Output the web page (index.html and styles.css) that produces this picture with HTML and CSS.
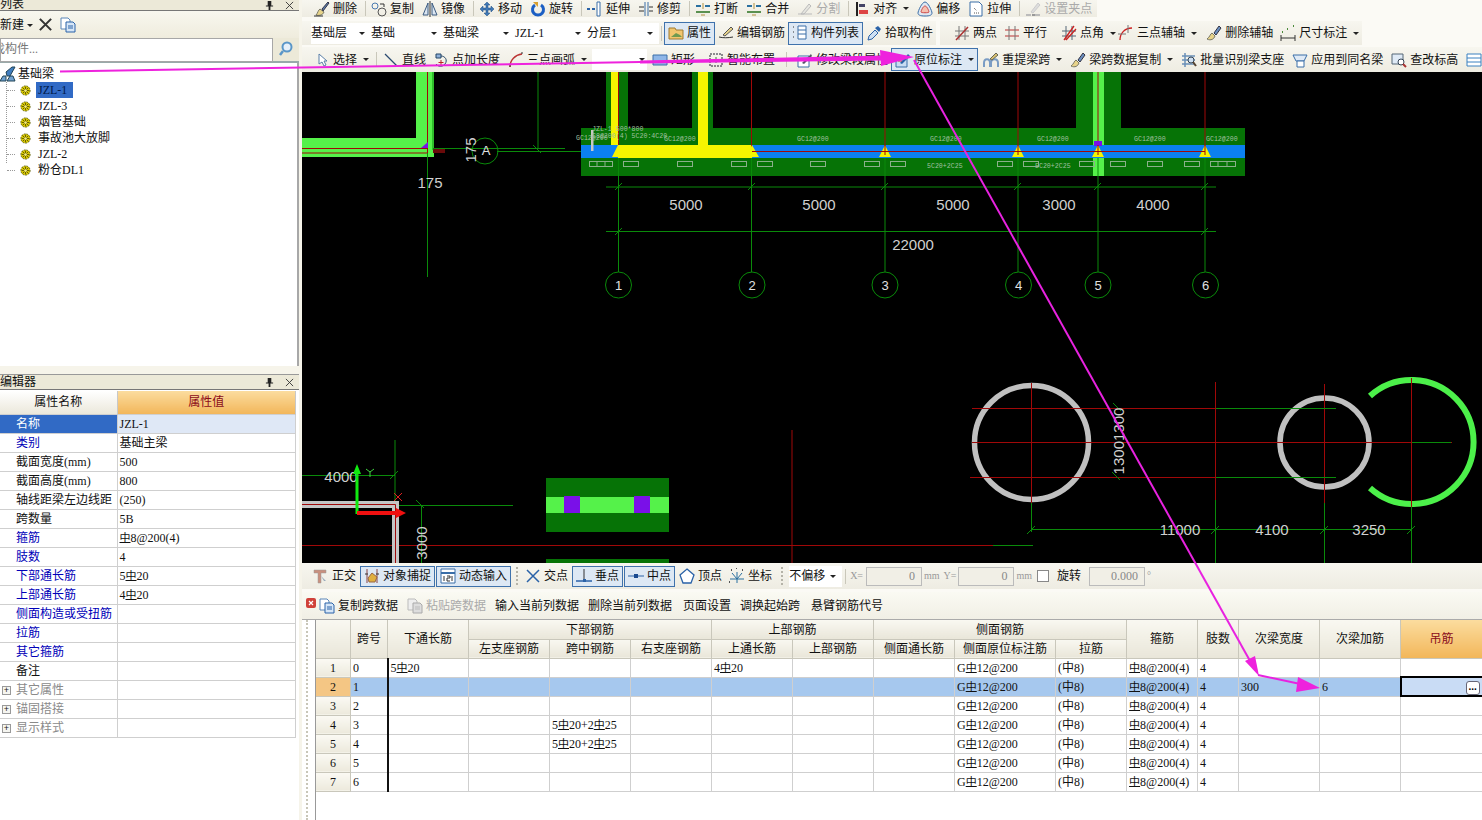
FILE: index.html
```html
<!DOCTYPE html>
<html lang="zh">
<head>
<meta charset="utf-8">
<title>基础梁</title>
<link rel="stylesheet" href="styles.css">
</head>
<body>
<svg class="defs" xmlns="http://www.w3.org/2000/svg">
<symbol id="i-del" viewBox="0 0 16 16"><path d="M2 14c3 1 7 0 8-3L6 8c-2 1-2 4-4 6z" fill="#e8d48a" stroke="#776"/><path d="M8 8l6-7 1 1-6 8z" fill="#5a7fb0" stroke="#334"/><path d="M0 15h9" stroke="#333"/></symbol>
<symbol id="i-copy" viewBox="0 0 16 16"><circle cx="4" cy="5" r="3" fill="none" stroke="#4a7ab0"/><circle cx="11" cy="11" r="4" fill="none" stroke="#555"/><path d="M9 3h4M13 3v3" stroke="#333"/></symbol>
<symbol id="i-mirror" viewBox="0 0 16 16"><path d="M6 2L1 14h5zM10 2l5 12h-5z" fill="#dbe6f2" stroke="#3a5a80"/><path d="M8 0v16" stroke="#333"/></symbol>
<symbol id="i-move" viewBox="0 0 16 16"><path d="M8 1l3 3H9v3h3V5l3 3-3 3V9H9v3h2l-3 3-3-3h2V9H4v2L1 8l3-3v2h3V4H5z" fill="#3f78b5" stroke="#214f80" stroke-width=".5"/></symbol>
<symbol id="i-rot" viewBox="0 0 16 16"><path d="M5 4a5.5 5.5 0 1 0 6 0" fill="none" stroke="#1c5fc4" stroke-width="3"/><path d="M3 1h5v5z" fill="#d8a030"/></symbol>
<symbol id="i-ext" viewBox="0 0 16 16"><path d="M0 8h3M5 8h3" stroke="#2a62a8" stroke-width="2"/><path d="M10 1h3v14h-3z" fill="#fff" stroke="#3a6ea8"/></symbol>
<symbol id="i-trim" viewBox="0 0 16 16"><path d="M7 1v14M10 1v14" stroke="#3a6ea8"/><path d="M1 6h5M1 10h5M11 6h4M11 10h4" stroke="#333"/></symbol>
<symbol id="i-break" viewBox="0 0 16 16"><path d="M1 5h5M10 5h5" stroke="#2a70a0" stroke-width="2"/><path d="M1 11h14" stroke="#5a9050" stroke-width="2"/><path d="M8 2v6M6 14h4" stroke="#b09040"/></symbol>
<symbol id="i-split" viewBox="0 0 16 16"><path d="M1 13h14M4 13l8-10 2 2-7 8z" fill="#e6e6e0" stroke="#bbb"/></symbol>
<symbol id="i-align" viewBox="0 0 16 16"><path d="M3 1v14" stroke="#222" stroke-width="2"/><path d="M5 3h6v3H5z" fill="#446"/><path d="M5 9h9v4H5z" fill="#d44"/></symbol>
<symbol id="i-offset" viewBox="0 0 16 16"><path d="M8 1c3 0 7 9 7 11s-2 3-7 3-7-1-7-3S5 1 8 1z" fill="#dfe8f2" stroke="#3a6ea8"/><path d="M8 5c2 0 4 5 4 6s-8 1-8 0 2-6 4-6z" fill="#f5c0b0" stroke="#c44"/></symbol>
<symbol id="i-stretch" viewBox="0 0 16 16"><path d="M2 1h9l3 3v11H2z" fill="#fff" stroke="#3a6ea8"/><path d="M6 7l3 3M6 12h5" stroke="#555" stroke-dasharray="1 1"/></symbol>
<symbol id="i-grip" viewBox="0 0 16 16"><path d="M1 14h5M10 14h5" stroke="#bbb" stroke-width="2"/><path d="M7 13h3v2H7z" fill="#999"/><path d="M6 11l7-9 2 2-7 8z" fill="#ddd" stroke="#ccc"/></symbol>
<symbol id="i-folder" viewBox="0 0 16 16"><path d="M1 3h6l1 2h7v9H1z" fill="#f2c66e" stroke="#a07a30"/><path d="M3 12l5-4 4 2 2 2z" fill="#6f9a50"/></symbol>
<symbol id="i-pen" viewBox="0 0 16 16"><path d="M1 12c4 1 9 1 14 0" stroke="#333" fill="none"/><path d="M5 10l8-8 2 2-8 7z" fill="#e8d48a" stroke="#555"/></symbol>
<symbol id="i-list" viewBox="0 0 16 16"><path d="M1 2h2M1 7h2M1 12h2" stroke="#333" stroke-dasharray="1 1"/><path d="M6 1h8v13H6zM6 5h8M6 9h8" fill="#fff" stroke="#3a6ea8"/></symbol>
<symbol id="i-drop" viewBox="0 0 16 16"><path d="M2 15l1-4 6-6 3 3-6 6z" fill="#cfe0f2" stroke="#2a62a8"/><path d="M9 3l3-2 3 3-2 3z" fill="#2a62a8"/></symbol>
<symbol id="i-two" viewBox="0 0 16 16"><path d="M1 6h14M1 11h14M5 1v14M11 1v14" stroke="#777"/><path d="M2 15L14 2" stroke="#a33" stroke-width="1.5"/></symbol>
<symbol id="i-par" viewBox="0 0 16 16"><path d="M1 5h14M1 11h14" stroke="#b33"/><path d="M5 1v14M11 1v14" stroke="#777"/></symbol>
<symbol id="i-ang" viewBox="0 0 16 16"><path d="M1 6h14M1 11h14M5 1v14M11 1v14" stroke="#567"/><path d="M3 15L13 1M5 15L15 4" stroke="#c22" stroke-width="1.3"/></symbol>
<symbol id="i-arcaxis" viewBox="0 0 16 16"><path d="M2 15C2 8 7 3 14 3" fill="none" stroke="#c22" stroke-width="1.4"/><path d="M0 9h8M10 0v8" stroke="#777"/></symbol>
<symbol id="i-brush" viewBox="0 0 16 16"><path d="M1 14c4 2 7 0 8-3L6 8c-2 1-2 4-5 6z" fill="#e8d48a" stroke="#776"/><path d="M8 8l5-7 2 2-5 7z" fill="#6a8fc0" stroke="#334"/></symbol>
<symbol id="i-dim" viewBox="0 0 16 16"><path d="M1 13h14M1 10v6M15 10v6" stroke="#333"/><path d="M2 7h1M7 4h1M13 1h1" stroke="#4a8a3a" stroke-width="2"/></symbol>
<symbol id="i-cursor" viewBox="0 0 16 16"><path d="M5 2v10l3-2 2 4 2-1-2-4h3z" fill="#fff" stroke="#5a7fa8"/></symbol>
<symbol id="i-line" viewBox="0 0 16 16"><path d="M2 2l12 12" stroke="#2a4a70" stroke-width="1.2"/></symbol>
<symbol id="i-ptlen" viewBox="0 0 16 16"><path d="M3 2h5v4H3z" fill="#8fb0d8" stroke="#246"/><path d="M8 4c4 0 7 4 4 8-2 3-7 3-9 0" fill="none" stroke="#246"/><path d="M8 8v5M5.5 10.500h5" stroke="#b22"/></symbol>
<symbol id="i-arc" viewBox="0 0 16 16"><path d="M2 15C2 8 7 3 14 2" fill="none" stroke="#b33" stroke-width="1.4"/><path d="M1 14h2M13 1h2" stroke="#333"/></symbol>
<symbol id="i-rect" viewBox="0 0 16 16"><path d="M1 3h14v10H1z" fill="#8fb6e8" stroke="#3a6ea8"/></symbol>
<symbol id="i-smart" viewBox="0 0 16 16"><path d="M2 2h12v12H2z" fill="none" stroke="#223" stroke-dasharray="2 1"/><path d="M8 5v6M5 8h6" stroke="#3a7a3a"/></symbol>
<symbol id="i-edit" viewBox="0 0 16 16"><path d="M1 4h11v11H1z" fill="#fff" stroke="#3a6ea8"/><path d="M5 11l9-9 1 2-8 8z" fill="#556" /></symbol>
<symbol id="i-mark" viewBox="0 0 16 16"><path d="M1 5h11v10H1z" fill="#c8dcf2" stroke="#3a6ea8"/><path d="M5 11l8-9 2 2-8 8z" fill="#2a62a8"/><path d="M3 9h4" stroke="#c33"/></symbol>
<symbol id="i-span" viewBox="0 0 16 16"><path d="M1 15v-4c0-5 6-5 6 0v4M8 15v-4c0-5 7-5 7 0v4" fill="none" stroke="#7a9cc4" stroke-width="2"/><path d="M7 7l6-6 2 2-6 5z" fill="#d8c070" stroke="#665"/></symbol>
<symbol id="i-batch" viewBox="0 0 16 16"><path d="M1 4h13M1 8h13M1 12h13M4 1v14" stroke="#6a90b8" stroke-width="1.500"/><circle cx="10" cy="8" r="3" fill="#cfe0f2" stroke="#345"/><path d="M12 10l3 4" stroke="#543" stroke-width="2"/></symbol>
<symbol id="i-apply" viewBox="0 0 16 16"><path d="M1 3h14l-3 6H4z" fill="#dfeaf6" stroke="#3a6ea8"/><path d="M5 9h7v6H5z" fill="#fff" stroke="#3a6ea8"/></symbol>
<symbol id="i-level" viewBox="0 0 16 16"><path d="M1 2h11v10H1z" fill="#dfeaf6" stroke="#567"/><circle cx="10" cy="10" r="3" fill="#fff" stroke="#345"/><path d="M12 12l3 3" stroke="#a33" stroke-width="2"/></symbol>
<symbol id="i-tbl" viewBox="0 0 16 16"><path d="M1 2h14v12H1zM1 6h14M1 10h14" fill="#fff" stroke="#3a80c0"/></symbol>
<symbol id="i-ortho" viewBox="0 0 16 16"><path d="M1 2h12v3H8v10H5V5H1z" fill="#c9907e" stroke="#999" stroke-width=".5"/><path d="M8 8l5 5-2 0z" fill="#9ab"/></symbol>
<symbol id="i-snap" viewBox="0 0 16 16"><path d="M3 1v14M13 1v14" stroke="#844"/><path d="M1 6h3M12 6h3" stroke="#333"/><path d="M4 10l4-5 5 4-2 5H5z" fill="#e0b040" stroke="#964"/></symbol>
<symbol id="i-dyn" viewBox="0 0 16 16"><path d="M1 1h14v14H1z" fill="#fff" stroke="#3a6ea8"/><path d="M1 5h14" stroke="#3a6ea8" stroke-width="2"/><path d="M4 8v5M7 8h3v2H7v3h3M12 8v5" stroke="#333" fill="none"/></symbol>
<symbol id="i-x" viewBox="0 0 16 16"><path d="M2 2l12 12M14 2L2 14" stroke="#2a62a8" stroke-width="1.500"/></symbol>
<symbol id="i-perp" viewBox="0 0 16 16"><path d="M0 13h16" stroke="#2a62a8" stroke-width="1.500"/><path d="M8 1v11" stroke="#333"/><path d="M7 11h3v3H7z" fill="#2a62a8"/></symbol>
<symbol id="i-mid" viewBox="0 0 16 16"><path d="M0 8h16" stroke="#2a62a8"/><path d="M6 6h4v4H6z" fill="#1a4a90"/></symbol>
<symbol id="i-vert" viewBox="0 0 16 16"><path d="M8 1l7 6-3 8H4L1 7z" fill="#fff" stroke="#2a62a8" stroke-width="1.300"/></symbol>
<symbol id="i-coord" viewBox="0 0 16 16"><path d="M8 4v11M1 11h14M3 5l5 6 5-6" fill="none" stroke="#2a70a0"/><path d="M2 2h1M7 0h2M13 2h1M0 14h2" stroke="#555" stroke-width="2" stroke-dasharray="1 1"/></symbol>
<symbol id="i-doc" viewBox="0 0 16 16"><path d="M1 1h7l2 2v9H1z" fill="#fff" stroke="#5a86b8"/><path d="M6 5h7l2 2v8H6z" fill="#d6e6f7" stroke="#2a62a8"/><path d="M8 9h5M8 11h5" stroke="#2a62a8"/></symbol>
<symbol id="i-doc-g" viewBox="0 0 16 16"><path d="M1 1h7l2 2v9H1z" fill="#eee" stroke="#bbb"/><path d="M6 5h7l2 2v8H6z" fill="#ddd" stroke="#aaa"/><path d="M8 9h5M8 11h5" stroke="#bbb"/></symbol>
<symbol id="i-pin" viewBox="0 0 10 10"><path d="M3 0h4v5h2v1H6v4H4V6H1V5h2z" fill="#222"/></symbol>
<symbol id="i-close" viewBox="0 0 10 10"><path d="M1 1l8 8M9 1L1 9" stroke="#333" stroke-width="1"/></symbol>
<symbol id="i-gear" viewBox="0 0 12 12"><circle cx="6" cy="6" r="5" fill="#d8c800" stroke="#5a5a00" stroke-dasharray="2 1"/><path d="M2 6h8M6 2v8M3 3l6 6M9 3l-6 6" stroke="#605a00"/><circle cx="6" cy="6" r="1.500" fill="#f5ee80"/></symbol>
<symbol id="i-tree" viewBox="0 0 16 16"><path d="M0 15l3-5h3v5zM7 15l3-5h3l2 5z" fill="#6fa0d0" stroke="#245"/><path d="M6 6l6-5h3l-5 9H7z" fill="#3f7cbf" stroke="#245"/></symbol>
</svg>

<div class="app">
  <aside class="left">
    <section class="pane-top">
      <header class="title title-clip"><span>列表</span><span class="win-btns"><svg><use href="#i-pin"/></svg><svg><use href="#i-close"/></svg></span></header>
      <div class="left-tools">
        <span class="dd">新建</span>
        <svg class="big-x" viewBox="0 0 16 16"><path d="M2 2l12 12M14 2L2 14" stroke="#333" stroke-width="2.200"/></svg>
        <svg class="ic"><use href="#i-doc"/></svg>
      </div>
      <div class="search">
        <div class="search-input"><span>找构件...</span></div>
        <div class="search-btn"><svg viewBox="0 0 16 16"><circle cx="9" cy="6" r="4.500" fill="#e6f0fa" stroke="#5a96c8" stroke-width="2"/><path d="M5 10l-3 4" stroke="#5a96c8" stroke-width="2.500"/></svg></div>
      </div>
      <div class="tree">
        <div class="root"><svg class="ic"><use href="#i-tree"/></svg><span>基础梁</span></div>
        <ul class="children">
          <li class="cur"><svg><use href="#i-gear"/></svg><span>JZL-1</span></li>
          <li><svg><use href="#i-gear"/></svg><span>JZL-3</span></li>
          <li><svg><use href="#i-gear"/></svg><span>烟管基础</span></li>
          <li><svg><use href="#i-gear"/></svg><span>事故池大放脚</span></li>
          <li><svg><use href="#i-gear"/></svg><span>JZL-2</span></li>
          <li><svg><use href="#i-gear"/></svg><span>粉仓DL1</span></li>
        </ul>
      </div>
    </section>
    <section class="pane-bottom">
      <header class="title"><span>编辑器</span><span class="win-btns"><svg><use href="#i-pin"/></svg><svg><use href="#i-close"/></svg></span></header>
      <table class="props">
        <thead><tr><th>属性名称</th><th class="orange">属性值</th></tr></thead>
        <tbody>
          <tr class="sel"><td class="nm">名称</td><td>JZL-1</td></tr>
          <tr><td class="nm link">类别</td><td>基础主梁</td></tr>
          <tr><td class="nm">截面宽度(mm)</td><td>500</td></tr>
          <tr><td class="nm">截面高度(mm)</td><td>800</td></tr>
          <tr><td class="nm">轴线距梁左边线距</td><td>(250)</td></tr>
          <tr><td class="nm">跨数量</td><td>5B</td></tr>
          <tr><td class="nm link">箍筋</td><td><u>中</u>8@200(4)</td></tr>
          <tr><td class="nm link">肢数</td><td>4</td></tr>
          <tr><td class="nm link">下部通长筋</td><td>5<u>中</u>20</td></tr>
          <tr><td class="nm link">上部通长筋</td><td>4<u>中</u>20</td></tr>
          <tr><td class="nm link">侧面构造或受扭筋</td><td></td></tr>
          <tr><td class="nm link">拉筋</td><td></td></tr>
          <tr><td class="nm link">其它箍筋</td><td></td></tr>
          <tr><td class="nm">备注</td><td></td></tr>
          <tr class="group"><td class="nm"><i class="plus">+</i>其它属性</td><td></td></tr>
          <tr class="group"><td class="nm"><i class="plus">+</i>锚固搭接</td><td></td></tr>
          <tr class="group"><td class="nm"><i class="plus">+</i>显示样式</td><td></td></tr>
        </tbody>
      </table>
    </section>
  </aside>

  <main class="right">
    <div class="bar r1">
      <div class="strip s1">
        <span class="it"><svg><use href="#i-del"/></svg>删除</span><i class="sep"></i>
        <span class="it"><svg><use href="#i-copy"/></svg>复制</span>
        <span class="it"><svg><use href="#i-mirror"/></svg>镜像</span><i class="sep"></i>
        <span class="it"><svg><use href="#i-move"/></svg>移动</span>
        <span class="it"><svg><use href="#i-rot"/></svg>旋转</span><i class="sep"></i>
        <span class="it"><svg><use href="#i-ext"/></svg>延伸</span>
        <span class="it"><svg><use href="#i-trim"/></svg>修剪</span><i class="sep"></i>
        <span class="it"><svg><use href="#i-break"/></svg>打断</span>
        <span class="it"><svg><use href="#i-break"/></svg>合并</span>
        <span class="it off"><svg><use href="#i-split"/></svg>分割</span><i class="sep"></i>
        <span class="it dd"><svg><use href="#i-align"/></svg>对齐</span>
        <span class="it"><svg><use href="#i-offset"/></svg>偏移</span>
        <span class="it"><svg><use href="#i-stretch"/></svg>拉伸</span><i class="sep"></i>
        <span class="it off"><svg><use href="#i-grip"/></svg>设置夹点</span>
      </div>
    </div>
    <div class="bar r2">
      <div class="strip s2a">
        <span class="combo first">基础层</span><span class="combo">基础</span><span class="combo">基础梁</span><span class="combo">JZL-1</span><span class="combo">分层1</span><i class="sep"></i>
        <span class="it hi"><svg><use href="#i-folder"/></svg>属性</span>
        <span class="it"><svg><use href="#i-pen"/></svg>编辑钢筋</span>
        <span class="it hi"><svg><use href="#i-list"/></svg>构件列表</span>
        <span class="it"><svg><use href="#i-drop"/></svg>拾取构件</span>
      </div>
      <div class="strip s2b">
        <span class="it"><svg><use href="#i-two"/></svg>两点</span>
        <span class="it"><svg><use href="#i-par"/></svg>平行</span>
        <span class="it dd ml7"><svg><use href="#i-ang"/></svg>点角</span>
        <span class="it dd mln5"><svg><use href="#i-arcaxis"/></svg>三点辅轴</span>
        <span class="it ml2"><svg><use href="#i-brush"/></svg>删除辅轴</span>
        <span class="it dd"><svg><use href="#i-dim"/></svg>尺寸标注</span>
      </div>
    </div>
    <div class="bar r3">
      <div class="strip s3">
        <span class="it dd"><svg><use href="#i-cursor"/></svg>选择</span><i class="sep"></i>
        <span class="it"><svg><use href="#i-line"/></svg>直线</span>
        <span class="it mln1"><svg><use href="#i-ptlen"/></svg>点加长度</span>
        <span class="it dd"><svg><use href="#i-arc"/></svg>三点画弧</span>
        <span class="blank dd"></span>
        <span class="it"><svg><use href="#i-rect"/></svg>矩形</span>
        <span class="it ml5"><svg><use href="#i-smart"/></svg>智能布置</span><i class="sep wide"></i>
        <span class="it"><svg><use href="#i-edit"/></svg>修改梁段属性</span>
        <span class="it hi dd mln2"><svg><use href="#i-mark"/></svg>原位标注</span>
        <span class="it dd"><svg><use href="#i-span"/></svg>重提梁跨</span>
        <span class="it dd"><svg><use href="#i-brush"/></svg>梁跨数据复制</span>
        <span class="it"><svg><use href="#i-batch"/></svg>批量识别梁支座</span>
        <span class="it"><svg><use href="#i-apply"/></svg>应用到同名梁</span>
        <span class="it"><svg><use href="#i-level"/></svg>查改标高</span>
        <span class="it"><svg><use href="#i-tbl"/></svg></span>
      </div>
    </div>

    <svg class="cad" viewBox="302 72 1180 491" xmlns="http://www.w3.org/2000/svg">
      <g class="g-bright">
        <rect x="302" y="138" width="132" height="19"/><rect x="416" y="72" width="18" height="85"/>
      </g>
      <rect class="dred" x="433" y="148" width="12" height="5"/>
      <g class="ln-red">
        <path d="M302 148.500H427M302 153H427M427.500 72V153"/>
      </g>
      <path class="purple" d="M428 142v6h-7z"/>
      <g class="ln-green">
        <path d="M427.500 153V277M433 72V150M433 148.500H565M497 151.500H581M538 72V149M533 145l8 8"/>
        <circle cx="485" cy="151" r="13"/>
      </g>
      <text class="d15" transform="translate(476 150) rotate(-90)" text-anchor="middle">175</text>
      <text class="d15" x="430" y="188" text-anchor="middle">175</text>
      <text class="d12" x="486" y="155" text-anchor="middle">A</text>

      <!-- beam -->
      <g class="g-dark">
        <rect x="581" y="128" width="664" height="48"/>
        <rect x="606" y="72" width="22" height="56"/><rect x="692" y="72" width="21" height="56"/><rect x="1076" y="72" width="45" height="56"/>
      </g>
      <rect class="g-bright" x="1093" y="72" width="11" height="104"/>
      <rect class="yel" x="611" y="72" width="7" height="73"/><rect class="yel" x="698" y="72" width="10" height="73"/>
      <rect class="blue" x="581" y="145" width="664" height="13"/>
      <rect class="yel" x="618" y="145" width="134" height="13"/>
      <path class="ln-red" d="M752 151.500H1205M618.500 72V145M751.500 72V155M885 72V155M1018 72V155M1098 72V155M1205 72V155"/>
      <g class="yel">
        <path d="M612 157l6-12 6 12zM746 157l6-12 7 12zM879 157l6-12 6 12zM1012 157l6-12 6 12zM1092 157l6-12 6 12zM1199 157l6-12 6 12z"/>
      </g>
      <rect class="purple" x="1094" y="141" width="8" height="5"/>
      <path class="ln-red" d="M885 145V155M1018 145V155M1098 145V155M1205 145V155M752 151.500H1205"/>
      <rect class="lite" x="591" y="130" width="2.500" height="21"/>
      <g class="boxes">
        <rect x="589.500" y="161.500" width="23" height="5"/><path d="M597 161.500v5M605 161.500v5"/>
        <rect x="623.500" y="161.500" width="15" height="5"/><rect x="677.500" y="161.500" width="15" height="5"/><rect x="731.500" y="161.500" width="15" height="5"/><rect x="757.500" y="161.500" width="15" height="5"/><rect x="810.500" y="161.500" width="15" height="5"/><rect x="864.500" y="161.500" width="15" height="5"/><rect x="890.500" y="161.500" width="15" height="5"/><rect x="997.500" y="161.500" width="15" height="5"/><rect x="1023.500" y="161.500" width="15" height="5"/><rect x="1079.500" y="161.500" width="15" height="5"/><rect x="1110.500" y="161.500" width="15" height="5"/><rect x="1147.500" y="161.500" width="15" height="5"/><rect x="1184.500" y="161.500" width="15" height="5"/><rect x="1210.500" y="161.500" width="25" height="5"/><path d="M1218 161.500v5M1227 161.500v5"/>
      </g>
      <g class="t6">
        <text x="592" y="131">JZL-1 500*800</text>
        <text x="576" y="140">GC12@200</text>
        <text x="592" y="138">C8@200(4) 5C20:4C20</text>
        <text x="664" y="141">GC12@200</text><text x="797" y="141">GC12@200</text><text x="930" y="141">GC12@200</text><text x="1037" y="141">GC12@200</text><text x="1134" y="141">GC12@200</text><text x="1206" y="141">GC12@200</text>
        <text x="927" y="168">5C20+2C25</text><text x="1035" y="168">5C20+2C25</text>
      </g>
      <g class="ln-green">
        <path d="M618.500 158V272M751.500 158V272M885 158V272M1018 158V272M1098 158V272M1205 158V272"/>
        <path d="M606 187H1216M606 231.500H1216"/>
        <path d="M615 190l7-7M748 190l7-7M881 190l7-7M1014 190l7-7M1094 190l7-7M1201 190l7-7M615 235l7-7M1201 235l7-7"/>
        <circle cx="618.500" cy="285" r="13"/><circle cx="752" cy="285" r="13"/><circle cx="885" cy="285" r="13"/><circle cx="1018.500" cy="285" r="13"/><circle cx="1098" cy="285" r="13"/><circle cx="1205.500" cy="285" r="13"/>
      </g>
      <g class="d15" text-anchor="middle">
        <text x="686" y="210">5000</text><text x="819" y="210">5000</text><text x="953" y="210">5000</text><text x="1059" y="210">3000</text><text x="1153" y="210">4000</text><text x="913" y="250">22000</text>
      </g>
      <g class="d12" text-anchor="middle">
        <text x="618.500" y="290">1</text><text x="752" y="290">2</text><text x="885" y="290">3</text><text x="1018.500" y="290">4</text><text x="1098" y="290">5</text><text x="1205.500" y="290">6</text>
      </g>

      <!-- circles -->
      <circle class="ring" cx="1031.500" cy="442.500" r="57"/>
      <circle class="ring" cx="1324.500" cy="442.500" r="44.500"/>
      <path class="arc" d="M1370 396A62 62 0 1 1 1370 488"/>
      <path class="ln-red" d="M972 408.500H1216M972 442.500H1452M970 477.500H1216M1031.500 383V503M1215.500 382V500M1324.500 384V503M1411.500 378V507M302 545.500H993M792 430V563"/>
      <g class="ln-green">
        <path d="M1216 408.500H1336M1412 442.500H1451M1216 477.500H1336M993 545.500H1033M1031.500 503V532M1215.500 500V563M1324.500 503V563M1411.500 507V563M1031 529.500H1412"/>
        <path d="M1027 534l8-8M1211 534l8-8M1320 534l8-8M1407 534l8-8M1113 403l8 8M1112 472l8 8"/>
      </g>
      <g class="d15" text-anchor="middle">
        <text x="1180" y="535">11000</text><text x="1272" y="535">4100</text><text x="1369" y="535">3250</text>
        <text transform="translate(1124 441) rotate(-90)">13001300</text>
      </g>

      <!-- lower-left -->
      <g class="ln-green"><path d="M302 475.500H395M395 440V503M399 505.500H513M421.500 505.500V563M390 479l8-8M416 500l8 8"/></g>
      <path class="ring-l" d="M302 504.500H395.500V563"/>
      <path class="ln-red" d="M302 504.500H395.500V563"/>
      <text class="d15" x="341" y="482" text-anchor="middle">4000</text>
      <text class="d15" transform="translate(427 543) rotate(-90)" text-anchor="middle">3000</text>
      <path class="axis-g" d="M355.500 514V474H353l4-10 4 10h-2.500V514z"/>
      <path class="axis-r" d="M357 511H396V508l10 5-10 5V515H357z"/>
      <path class="ln-bg" d="M366 469l4 3 4-3M370 472v5"/>
      <path class="ln-x" d="M394 493l8 8M402 493l-8 8"/>
      <g class="g-dark"><rect x="546" y="478" width="123" height="54"/><rect x="546" y="559" width="123" height="4"/></g>
      <rect class="g-bright" x="546" y="497" width="123" height="16"/>
      <rect class="purple" x="564" y="496" width="16" height="17"/><rect class="purple" x="634" y="496" width="16" height="17"/>
    </svg>

    <div class="bar snap">
      <div class="strip s4">
        <span class="it"><svg><use href="#i-ortho"/></svg>正交</span>
        <span class="it hi"><svg><use href="#i-snap"/></svg>对象捕捉</span>
        <span class="it hi"><svg><use href="#i-dyn"/></svg>动态输入</span><i class="sep dotted"></i>
        <span class="it"><svg><use href="#i-x"/></svg>交点</span>
        <span class="it hi"><svg><use href="#i-perp"/></svg>垂点</span>
        <span class="it hi"><svg><use href="#i-mid"/></svg>中点</span>
        <span class="it"><svg><use href="#i-vert"/></svg>顶点</span>
        <span class="it"><svg><use href="#i-coord"/></svg>坐标</span><i class="sep dotted wide"></i>
        <span class="combo small">不偏移</span><i class="sep narrow"></i>
        <span class="lab xl">X=</span><span class="num w56">0</span><span class="lab">mm</span>
        <span class="lab y">Y=</span><span class="num w56">0</span><span class="lab">mm</span>
        <span class="check"></span><span class="rot">旋转</span><span class="num w56">0.000</span><span class="lab">°</span>
      </div>
    </div>

    <div class="lower">
      <div class="lower-head">
        <svg class="close-red" viewBox="0 0 10 10"><rect width="10" height="10" rx="2" fill="#d0413a"/><path d="M3 3l4 4M7 3L3 7" stroke="#fff" stroke-width="1.200"/></svg>
        <span class="it"><svg><use href="#i-doc"/></svg>复制跨数据</span>
        <span class="it off"><svg><use href="#i-doc-g"/></svg>粘贴跨数据</span>
        <span class="it">输入当前列数据</span>
        <span class="it">删除当前列数据</span>
        <span class="it ml2">页面设置</span>
        <span class="it">调换起始跨</span>
        <span class="it ml2">悬臂钢筋代号</span>
      </div>
      <div class="grid-wrap">
        <div class="grid-inner">
        <table class="grid">
          <colgroup><col class="c35"><col class="c37"><col class="c81"><col class="c81"><col class="c81"><col class="c81"><col class="c81"><col class="c81"><col class="c81"><col class="c101"><col class="c71"><col class="c71"><col class="c41"><col class="c81"><col class="c81"><col class="c82"></colgroup>
          <thead>
            <tr><th rowspan="2"></th><th rowspan="2">跨号</th><th rowspan="2">下通长筋</th><th colspan="3">下部钢筋</th><th colspan="2">上部钢筋</th><th colspan="3">侧面钢筋</th><th rowspan="2">箍筋</th><th rowspan="2">肢数</th><th rowspan="2">次梁宽度</th><th rowspan="2">次梁加筋</th><th rowspan="2" class="orange">吊筋</th></tr>
            <tr><th>左支座钢筋</th><th>跨中钢筋</th><th>右支座钢筋</th><th>上通长筋</th><th>上部钢筋</th><th>侧面通长筋</th><th>侧面原位标注筋</th><th>拉筋</th></tr>
          </thead>
          <tbody>
            <tr><th>1</th><td>0</td><td class="fz">5<u>中</u>20</td><td></td><td></td><td></td><td>4<u>中</u>20</td><td></td><td></td><td>G<u>中</u>12@200</td><td>(中8)</td><td><u>中</u>8@200(4)</td><td>4</td><td></td><td></td><td></td></tr>
            <tr class="sel"><th>2</th><td>1</td><td class="fz"></td><td></td><td></td><td></td><td></td><td></td><td></td><td>G<u>中</u>12@200</td><td>(中8)</td><td><u>中</u>8@200(4)</td><td>4</td><td>300</td><td>6</td><td class="active"><span class="more">...</span></td></tr>
            <tr><th>3</th><td>2</td><td class="fz"></td><td></td><td></td><td></td><td></td><td></td><td></td><td>G<u>中</u>12@200</td><td>(中8)</td><td><u>中</u>8@200(4)</td><td>4</td><td></td><td></td><td></td></tr>
            <tr><th>4</th><td>3</td><td class="fz"></td><td></td><td>5<u>中</u>20+2<u>中</u>25</td><td></td><td></td><td></td><td></td><td>G<u>中</u>12@200</td><td>(中8)</td><td><u>中</u>8@200(4)</td><td>4</td><td></td><td></td><td></td></tr>
            <tr><th>5</th><td>4</td><td class="fz"></td><td></td><td>5<u>中</u>20+2<u>中</u>25</td><td></td><td></td><td></td><td></td><td>G<u>中</u>12@200</td><td>(中8)</td><td><u>中</u>8@200(4)</td><td>4</td><td></td><td></td><td></td></tr>
            <tr><th>6</th><td>5</td><td class="fz"></td><td></td><td></td><td></td><td></td><td></td><td></td><td>G<u>中</u>12@200</td><td>(中8)</td><td><u>中</u>8@200(4)</td><td>4</td><td></td><td></td><td></td></tr>
            <tr><th>7</th><td>6</td><td class="fz"></td><td></td><td></td><td></td><td></td><td></td><td></td><td>G<u>中</u>12@200</td><td>(中8)</td><td><u>中</u>8@200(4)</td><td>4</td><td></td><td></td><td></td></tr>
          </tbody>
        </table>
        </div>
      </div>
    </div>
  </main>
</div>

<svg class="annot" viewBox="0 0 1482 820" xmlns="http://www.w3.org/2000/svg">
  <path class="mg" d="M60 71.500L640 62"/>
  <path class="mgf" d="M640 60.500L885 55.500L885 60.500L640 63.500z"/>
  <path class="mgf" d="M880 50L914 57L881 66z"/>
  <path class="mg2" d="M914 60L1254 668"/>
  <path class="mgf" d="M1245 661L1259 676L1255 656z"/>
  <path class="mg2" d="M1258 675L1305 685"/>
  <path class="mgf" d="M1298 677L1320 688L1296 692z"/>
</svg>
</body>
</html>
```

FILE: styles.css
```css
* { box-sizing: border-box; }
html, body { margin: 0; height: 100%; overflow: hidden; }
body {
  font: 12px/16px "Liberation Serif", "Noto Sans CJK SC", serif;
  color: #111;
  background: #fbfaf5;
}
.defs { display: none; }
.app { display: flex; width: 1482px; height: 820px; overflow: hidden; position: relative; }

/* left column */
.left { width: 302px; flex: none; display: flex; flex-direction: column; background: #f6f4ea; }
.pane-top { height: 374px; display: flex; flex-direction: column; }
.pane-bottom { flex: 1; background: #fff; border-right: 3px solid #f6f4ea; }
.title {
  height: 16px; display: flex; justify-content: space-between; align-items: center;
  background: #ece9d8; border-bottom: 1px solid #777; border-top: 1px solid #999;
  font-size: 12px; padding-right: 4px; width: 299px;
}
.title-clip { height: 11px; border-top: 0; align-items: flex-end; overflow: hidden; }
.title-clip > span:first-child { transform: translateY(2px); }
.win-btns { display: flex; gap: 11px; margin-right: 1px; }
.win-btns svg { width: 9px; height: 9px; }
.left-tools {
  height: 27px; width: 299px; display: flex; align-items: center; gap: 5px;
  background: linear-gradient(#f8f7ef, #efecdd);
}
.left-tools .dd::after { margin-left: 3px; }
.big-x { width: 15px; height: 15px; margin-right: 2px; }
.ic { width: 16px; height: 16px; flex: none; }
.search { height: 25px; width: 299px; display: flex; gap: 2px; background: #ece9d8; border-bottom: 2px solid #9aa; }
.search-input {
  width: 273px; height: 24px; background: #fff; border: 1px solid #a7a7a7;
  color: #777; overflow: hidden; line-height: 20px; padding-left: 1px;
}
.search-input span { display: block; margin-left: -9px; }
.search-btn { width: 22px; height: 22px; display: flex; align-items: center; justify-content: center; }
.search-btn svg { width: 16px; height: 16px; }
.tree { flex: none; height: 303px; width: 299px; background: #fff; border-right: 2px solid #a8a8a8; }
.root { display: flex; align-items: center; gap: 2px; height: 19px; padding-top: 2px; }
.children {
  list-style: none; margin: 0 0 0 6px; padding: 0;
  border-left: 1px dotted #999; height: 81px;
}
.children li { display: flex; align-items: center; height: 16px; padding-left: 13px; }
.children li::before { content: ""; width: 8px; border-top: 1px dotted #999; margin-left: -13px; margin-right: 5px; }
.children svg { width: 11px; height: 11px; flex: none; margin-right: 5px; }
.children span { padding: 0 2px; line-height: 16px; }
.children .cur span { background: #316ac5; color: #001a4a; width: 37px; }

/* property table */
.props { border-collapse: collapse; table-layout: fixed; width: 296px; margin-top: 1px; }
.props th:first-child, .props td:first-child { width: 117px; }
.props th {
  height: 23px; font-weight: 400; font-size: 12px;
  background: linear-gradient(#fff, #ebe8db); border-right: 1px solid #c8c8c8;
}
.orange, .props th.orange, .grid th.orange { background: linear-gradient(#fbdc9e, #f2b65a); color: #8a0a1a; }
.props td {
  height: 19px; padding: 1px 0 0 2px; border: 1px solid #cfcfcf; border-left: 0;
  white-space: nowrap; overflow: hidden; line-height: 17px;
}
.props td.nm { padding-left: 16px; }
.props td.link { color: #0000b8; }
.props .sel td { background: #dfe8f6; }
.props .sel td.nm { background: #316ac5; color: #fff; }
.props .group td.nm { color: #8a8a8a; padding-left: 2px; }
.plus {
  display: inline-block; width: 9px; height: 9px; margin-right: 5px; border: 1px solid #999; background: #f5f5f0;
  color: #222; font: 9px/7px "Liberation Sans", sans-serif; text-align: center; vertical-align: 1px;
}
u { font-size: 11px; text-decoration: underline; text-underline-offset: 0; }

/* right column */
.right { flex: 1; min-width: 0; display: flex; flex-direction: column; background: #fbfaf5; }
.bar { display: flex; flex: none; gap: 4px; }
.strip {
  display: flex; align-items: center; gap: 1px; padding-left: 8px;
  background: linear-gradient(#f7f6ef, #eeece2);
  white-space: nowrap;
}
.r1 { height: 17px; margin-bottom: 4px; overflow: hidden; }
.r2 { height: 24px; margin-bottom: 2px; }
.r3 { height: 25px; overflow: hidden; }
.s1 { padding-left: 10px; }
.s1 .it { padding: 0 3px 0 2px; margin-right: 2px; }
.s1 .sep { margin: 0 2px; }
.s1 .dd::after { margin-left: 3px; }
.s2a { padding-left: 9px; gap: 0; }
.s2a .sep { margin: 0 2px; }
.s2b { padding-left: 11px; gap: 1px; }
.s2b .dd::after { margin-left: 3px; }
.s3 { padding-left: 9px; width: 1180px; gap: 2px; }
.s3 .dd::after { margin-left: 3px; }
.s3 .sep { margin: 0 1px 0 2px; }
.s3 .sep.wide { margin: 0 5px 0 6px; }
.ml2 { margin-left: 2px; } .ml5 { margin-left: 5px; } .ml7 { margin-left: 7px; }
.mln1 { margin-left: -1px; } .mln2 { margin-left: -2px; } .mln5 { margin-left: -5px; }
.it { display: flex; align-items: center; gap: 3px; padding: 0 3px; height: 100%; color: #111; }
.it svg { width: 16px; height: 16px; flex: none; }
.it.off { color: #aaa; }
.it.hi { border: 1px solid #3f72ac; background: #dde8f4; height: 23px; padding: 0 3px; }
.dd::after {
  content: ""; display: inline-block; width: 0; height: 0; margin-left: 6px;
  border: 3px solid transparent; border-top-color: #222; border-bottom: 0; vertical-align: middle;
}
.sep { width: 1px; height: 15px; background: #c9c7ba; margin: 0 4px; flex: none; }
.sep.dotted { background: none; border-left: 2px dotted #b5b3a8; width: 2px; height: 18px; margin: 0 3px 0 4px; }
.sep.dotted.wide { margin: 0 5px 0 5px; }
.sep.narrow { margin: 0 2px; }
.combo {
  display: flex; align-items: center; justify-content: space-between;
  width: 72px; height: 21px; padding: 0 6px 0 0; background: #fff; flex: none;
}
.combo.first { width: 60px; }
.combo::after {
  content: ""; width: 0; height: 0; border: 3px solid transparent; border-top-color: #222; border-bottom: 0;
}
.combo.small { width: 53px; }
.blank { width: 55px; height: 21px; background: #fff; display: flex; align-items: center; justify-content: flex-end; padding-right: 2px; flex: none; }

/* drawing canvas */
.cad { width: 1180px; height: 491px; display: block; flex: none; background: #000; }
.g-bright { fill: #55f24a; }
.g-dark { fill: #067306; }
.yel { fill: #f5f500; }
.blue { fill: #0b80f0; }
.purple { fill: #7a10e8; }
.lite { fill: #c8c8c8; }
.dred { fill: #6a0a0a; }
.ln-red, .ln-red path { fill: none; stroke: #a00808; stroke-width: 1; }
.ln-green path, .ln-green circle { fill: none; stroke: #0a8a0a; stroke-width: 1; }
.boxes rect, .boxes path { fill: none; stroke: #8ab08a; stroke-width: 1; }
.t6 text { font: 6.600px "Liberation Mono", monospace; fill: #a0c0a0; }
.d15, .d15 text { font: 15px "Liberation Sans", sans-serif; fill: #d0d0d0; }
.d12, .d12 text { font: 13px "Liberation Sans", sans-serif; fill: #e0e0e0; }
.ring { fill: none; stroke: #c0c0c0; stroke-width: 5.5; }
.ring-l { fill: none; stroke: #c4c4c4; stroke-width: 7; }
.arc { fill: none; stroke: #4cf04a; stroke-width: 6; }
.axis-g { fill: #10ea10; }
.axis-r { fill: #f01010; }
.ln-bg { fill: none; stroke: #40d040; }
.ln-x { fill: none; stroke: #e02020; }

/* snap toolbar */
.snap { height: 29px; }
.s4 { padding-left: 8px; height: 26px; gap: 1px; width: 1180px; }
.s4 .it { padding: 0 3px; }
.s4 .it.hi { height: 21px; }
.lab { color: #999; font-size: 10px; padding: 0 1px; }
.lab.xl { padding-right: 2px; }
.lab.y { margin-left: 1px; }
.num { height: 19px; border: 1px solid #bbb; background: #f1efe6; color: #888; text-align: right; padding-right: 6px; line-height: 17px; }
.w56 { width: 56px; }
.check { width: 12px; height: 12px; border: 1px solid #888; background: #fff; margin-left: 3px; }
.rot { margin: 0 7px 0 7px; }

/* lower grid */
.lower { flex: 1; display: flex; flex-direction: column; background: #fff; min-height: 0; }
.lower-head {
  height: 28px; flex: none; display: flex; align-items: center; gap: 3px; padding: 1px 0 0 4px;
  background: linear-gradient(#fafaf3, #f1efe5); border-bottom: 1px solid #aaa;
}
.close-red { width: 10px; height: 10px; margin: -6px -3px 0 0; }
.grid-wrap { flex: 1; margin-left: 4px; border-left: 2px dotted #c8c6b8; padding-left: 7px; min-height: 0; }
.grid-inner { height: 100%; border-left: 1px solid #999; overflow: hidden; }
.grid { border-collapse: collapse; table-layout: fixed; width: 1167px; margin-left: -1px; }
.c35 { width: 35px; } .c37 { width: 37px; } .c81 { width: 81px; } .c101 { width: 101px; }
.c71 { width: 71px; } .c41 { width: 41px; } .c82 { width: 82px; }
.grid thead th {
  height: 19px; font-weight: 400; border: 1px solid #c9c7bb; border-top: 0; padding: 1px 0 0;
  background: linear-gradient(#f9f8f1, #e9e6d9); white-space: nowrap; overflow: hidden;
}
.grid tbody th {
  font-weight: 400; padding: 1px 0 0; background: linear-gradient(#fbfaf4, #ece9dc); border: 1px solid #c9c7bb;
}
.grid td {
  height: 19px; padding: 1px 0 0 2px; border: 1px solid #cfcfcf; white-space: nowrap; overflow: hidden; line-height: 17px;
}
.grid td.fz { border-left: 2px solid #111; }
.grid .sel td { background: #a6c8ee; }
.grid .sel th { background: #f4c684; }
.grid td.active { background: #c9dcf5; border: 2px solid #000; text-align: right; padding: 0 2px 0 0; }
.more {
  display: inline-block; width: 14px; height: 14px; border: 1px solid #667; border-radius: 3px; background: #fff;
  font: 700 10px/9px "Liberation Sans", sans-serif; text-align: center; color: #000;
}

/* hand-drawn markup lying over the screenshot */
.annot { position: absolute; left: 0; top: 0; width: 1482px; height: 820px; pointer-events: none; }
.mg { fill: none; stroke: #ee22dd; stroke-width: 2; }
.mg2 { fill: none; stroke: #e822e0; stroke-width: 2; }
.mgf { fill: #ee22dd; }
```
